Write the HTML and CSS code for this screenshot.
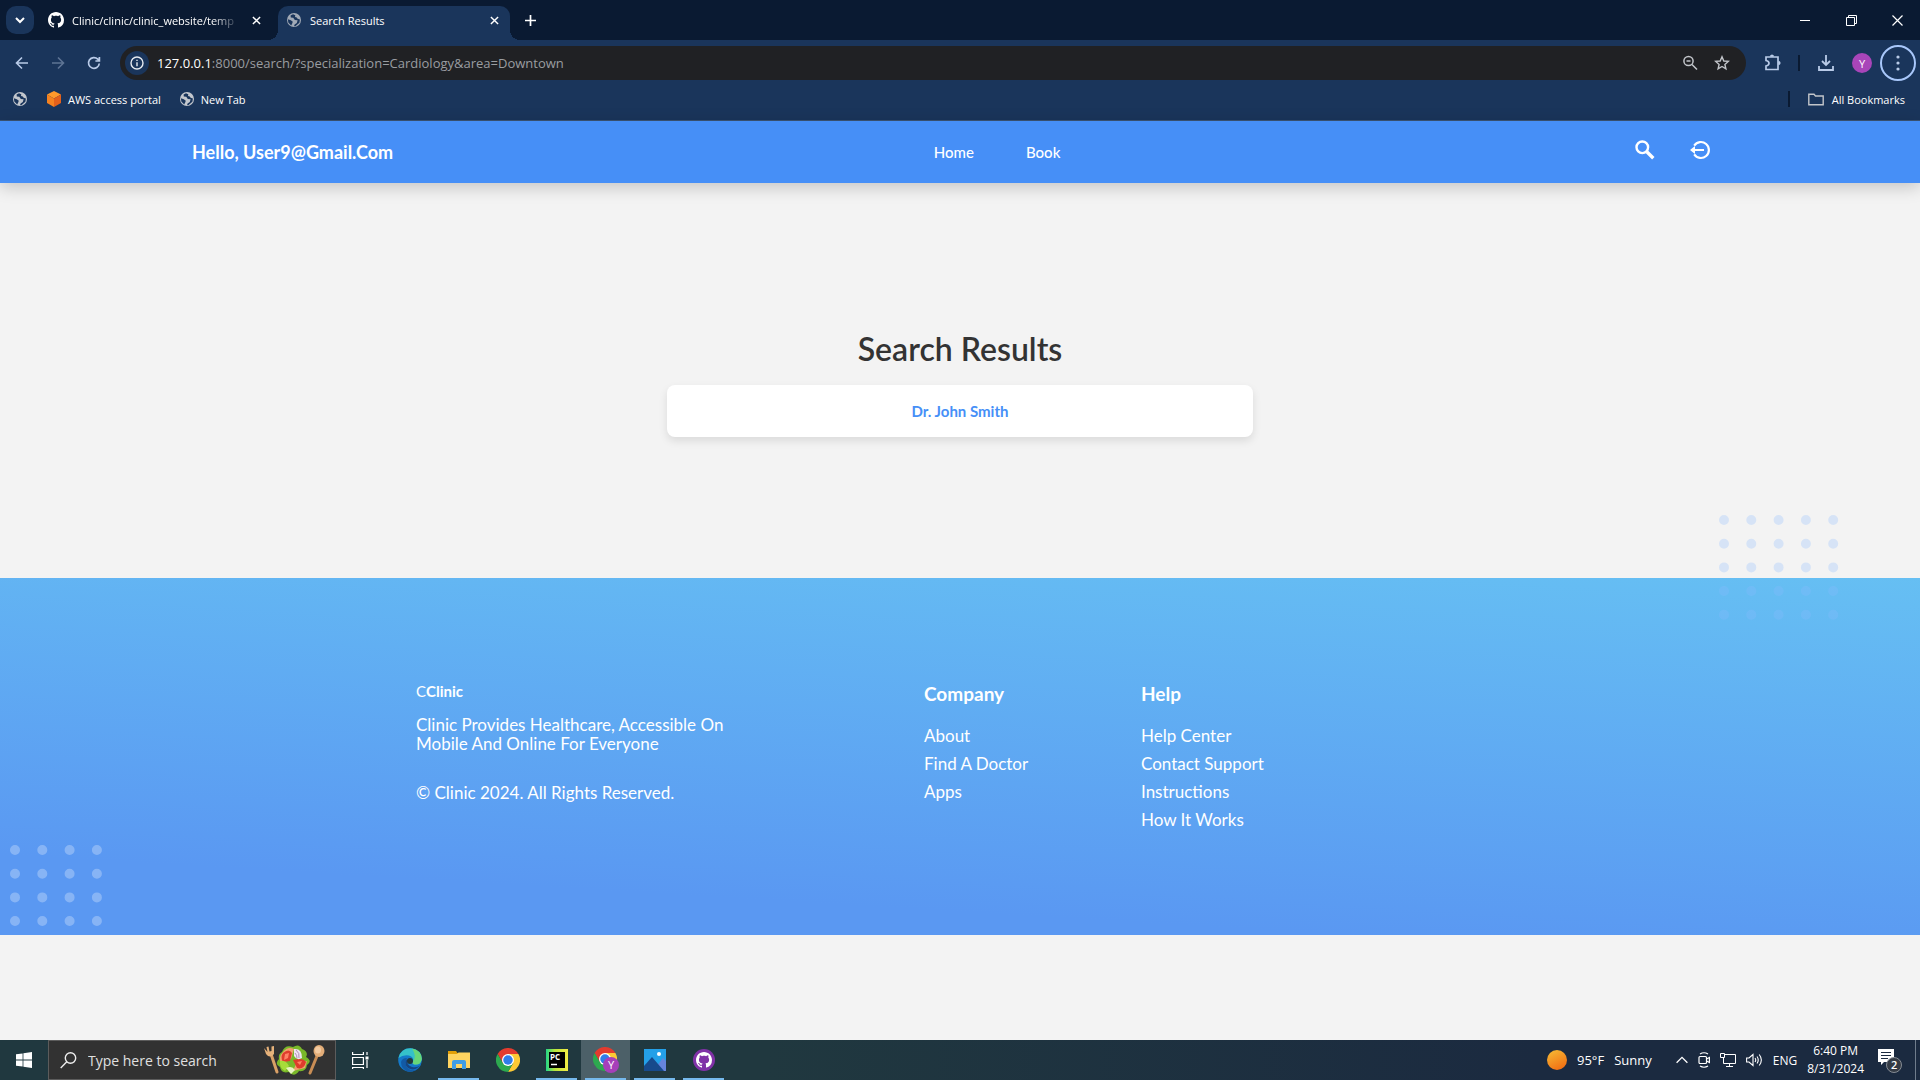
FILE: index.html
```html
<!DOCTYPE html>
<html lang="en">
<head>
<meta charset="utf-8">
<title>Search Results</title>
<link rel="stylesheet" href="styles.css">
</head>
<body>
<svg class="defs" aria-hidden="true">
  <symbol id="globe" viewBox="0 0 16 16"><circle cx="8" cy="8" r="7" fill="#c3c7cd"/><path d="M7 2.2 4.6 3.6 4.8 5.4 7.3 5.8 8.8 8 11.6 8.3 10.8 11 8.6 12.6 8 14.2 9.6 14 13.4 10.8 13.9 7.4 11.6 6.8 10.8 5.6 9 5 9.3 3.2ZM1.9 7.2 2.3 10.6 5.2 13.6 6.2 11.6 6.8 9.8 4.8 8.2Z" fill="#1a355b"/></symbol>
  <symbol id="octocat" viewBox="0 0 16 16"><path fill="#fff" d="M8 0C3.58 0 0 3.58 0 8c0 3.54 2.29 6.53 5.47 7.59.4.07.55-.17.55-.38 0-.19-.01-.82-.01-1.49-2.01.37-2.53-.49-2.69-.94-.09-.23-.48-.94-.82-1.13-.28-.15-.68-.52-.01-.53.63-.01 1.08.58 1.23.82.72 1.21 1.87.87 2.33.66.07-.52.28-.87.51-1.07-1.78-.2-3.64-.89-3.64-3.95 0-.87.31-1.59.82-2.15-.08-.2-.36-1.02.08-2.12 0 0 .67-.21 2.2.82.64-.18 1.32-.27 2-.27s1.36.09 2 .27c1.53-1.04 2.2-.82 2.2-.82.44 1.1.16 1.92.08 2.12.51.56.82 1.27.82 2.15 0 3.07-1.87 3.75-3.65 3.95.29.25.54.73.54 1.48 0 1.07-.01 1.93-.01 2.2 0 .21.15.46.55.38A8.01 8.01 0 0 0 16 8c0-4.42-3.58-8-8-8"/></symbol>
  <symbol id="cross" viewBox="0 0 10 10"><path d="M1 1 9 9M9 1 1 9" stroke="#fff" stroke-width="1.6"/></symbol>
  <symbol id="chrome" viewBox="0 0 48 48"><path d="M24 12H44.8A24 24 0 0 0 3.2 12L13.6 30Z" fill="#e33b2e"/><path d="M34.4 30 24 48A24 24 0 0 0 44.8 12H24Z" fill="#fcc934"/><path d="M13.6 30 3.2 12A24 24 0 0 0 24 48L34.4 30Z" fill="#2da94f"/><circle cx="24" cy="24" r="12" fill="#fff"/><circle cx="24" cy="24" r="9.5" fill="#2f7de9"/></symbol>
</svg>

<header class="browser">
  <div class="tabstrip">
    <button class="tab-search" aria-label="Search tabs"><svg width="10" height="8" viewBox="0 0 10 8"><path d="M1 2 5 6 9 2" fill="none" stroke="#fff" stroke-width="2"/></svg></button>
    <div class="tab">
      <svg width="16" height="16"><use href="#octocat"/></svg>
      <span class="tab-title faded">Clinic/clinic/clinic_website/temp</span>
      <button class="tab-close" aria-label="Close tab"><svg width="9" height="9"><use href="#cross"/></svg></button>
    </div>
    <div class="tab active">
      <svg width="16" height="16" opacity=".8"><use href="#globe"/></svg>
      <span class="tab-title">Search Results</span>
      <button class="tab-close" aria-label="Close tab"><svg width="9" height="9"><use href="#cross"/></svg></button>
    </div>
    <button class="new-tab" aria-label="New tab"><svg width="11" height="11" viewBox="0 0 11 11"><path d="M5.500 0V11M0 5.500H11" stroke="#fff" stroke-width="1.700"/></svg></button>
    <div class="window-controls">
      <button aria-label="Minimize"><svg width="10" height="10"><path d="M0 5.500H10" stroke="#fff"/></svg></button>
      <button aria-label="Restore"><svg width="11" height="11" fill="none" stroke="#fff"><path d="M.5 2.500H8.500V10.500H.5ZM2.500 2.500V.5H10.500V8.500H8.500"/></svg></button>
      <button aria-label="Close"><svg width="11" height="11"><path d="M.5.5 10.500 10.500M10.500.5.5 10.500" stroke="#fff" stroke-width="1.200"/></svg></button>
    </div>
  </div>

  <div class="toolbar">
    <button class="tool" aria-label="Back"><svg width="14" height="14" fill="none" stroke="#b9cbe8" stroke-width="1.600"><path d="M13 7H1.500M7 1.500 1.500 7 7 12.500"/></svg></button>
    <button class="tool" aria-label="Forward"><svg width="14" height="14" fill="none" stroke="#5e7494" stroke-width="1.600"><path d="M1 7H12.500M7 1.500 12.500 7 7 12.500"/></svg></button>
    <button class="tool" aria-label="Reload"><svg width="14" height="14" fill="none" stroke="#b9cbe8" stroke-width="1.700"><path d="M12.300 7.500A5.400 5.400 0 1 1 10.800 3.200L12 4.400M12.400 1V5H8.400"/></svg></button>
    <div class="omnibox">
      <button class="site-info" aria-label="Site information"><svg width="14" height="14" fill="none" stroke="#e6eaf0" stroke-width="1.400"><circle cx="7" cy="7" r="6"/><path d="M7 6.300V10.300M7 3.700V5.100"/></svg></button>
      <div class="url" role="textbox" aria-label="Address"><span class="host">127.0.0.1</span>:8000/search/?specialization=Cardiology&amp;area=Downtown</div>
      <button aria-label="Zoom"><svg width="16" height="16" fill="none" stroke="#c2c5ca" stroke-width="1.500"><circle cx="6.500" cy="6" r="4.600"/><path d="M4.500 6H8.500M10 9.500 15 14.500"/></svg></button>
      <button aria-label="Bookmark this page"><svg width="16" height="16" viewBox="0 0 16 16" fill="none" stroke="#c2c5ca" stroke-width="1.400"><path d="M8 1.800 9.800 6 14.300 6.400 10.900 9.400 11.900 13.900 8 11.500 4.100 13.900 5.100 9.400 1.700 6.400 6.200 6Z"/></svg></button>
    </div>
    <div class="actions">
      <button aria-label="Extensions"><svg width="18" height="18" viewBox="0 0 18 18" fill="none" stroke="#b9cbe8" stroke-width="1.700"><path d="M2 3H14V15.500H2V12Q5 11.500 5 9.300T2 6.500Z"/><path d="M6.500 2.500Q8 .2 9.500 2.500M14.500 7.500Q17 9 14.500 10.500" fill="#b9cbe8"/></svg></button>
      <i class="divider"></i>
      <button aria-label="Downloads"><svg width="16" height="16" fill="none" stroke="#b9cbe8" stroke-width="1.800"><path d="M8 0V9.500M4 6 8 10 12 6M1 11V15H15V11"/></svg></button>
      <button class="avatar" aria-label="Profile">Y</button>
      <button class="menu" aria-label="Menu"><svg width="4" height="16" fill="#b9cbe8"><circle cx="2" cy="2" r="1.600"/><circle cx="2" cy="8" r="1.600"/><circle cx="2" cy="14" r="1.600"/></svg></button>
    </div>
  </div>

  <nav class="bookmarks" aria-label="Bookmarks">
    <a href="#" aria-label="Bookmark"><svg width="16" height="16"><use href="#globe"/></svg></a>
    <a href="#"><svg width="16" height="16" viewBox="0 0 16 16"><path d="M8 0 15 3.500 8 7.500 1 3.500Z" fill="#ff9a2b"/><path d="M1 3.500 8 7.500V16L1 12Z" fill="#f58220"/><path d="M15 3.500 8 7.500V16L15 12Z" fill="#e4601b"/></svg>AWS access portal</a>
    <a href="#"><svg width="16" height="16"><use href="#globe"/></svg>New Tab</a>
    <i class="divider"></i>
    <a href="#" class="all"><svg width="16" height="13" fill="none" stroke="#c2c5ca" stroke-width="1.400"><path d="M.8 1.200H6L7.500 3H15.200V11.800H.8Z"/></svg>All Bookmarks</a>
  </nav>
</header>

<div class="page">
  <header class="site-header">
    <strong class="greeting">Hello, User9@Gmail.Com</strong>
    <nav class="site-nav"><a href="#">Home</a><a href="#">Book</a></nav>
    <div class="site-icons">
      <a href="#" aria-label="Search"><svg width="20" height="20" fill="none" stroke="#fff"><circle cx="7.300" cy="7.300" r="5.800" stroke-width="2.400"/><path d="M11.800 11.800 18.300 18.300" stroke-width="3.400"/></svg></a>
      <a href="#" aria-label="Log out"><svg width="20" height="20" fill="none" stroke="#fff" stroke-width="2.200"><path d="M4.200 5.600A8 8 0 1 1 4.200 14.400M5 10H14"/><path d="M0 10 5 6V14Z" fill="#fff" stroke="none"/></svg></a>
    </div>
  </header>

  <main class="results">
    <h1>Search Results</h1>
    <ul><li><a href="#">Dr. John Smith</a></li></ul>
  </main>

  <footer class="site-footer">
    <svg class="dots dots-right" width="120" height="106"><path d="M5 5H116M5 28.700H116M5 52.400H116M5 76H116M5 99.700H116"/></svg>
    <svg class="dots dots-left" width="92" height="82"><path d="M5 5H88M5 28.700H88M5 52.400H88M5 76H88"/></svg>
    <div class="brand">
      <p class="logo">C<b>Clinic</b></p>
      <p class="about">Clinic Provides Healthcare, Accessible On Mobile And Online For Everyone</p>
      <p>© Clinic 2024. All Rights Reserved.</p>
    </div>
    <section class="company"><h2>Company</h2><ul><li><a href="#">About</a></li><li><a href="#">Find A Doctor</a></li><li><a href="#">Apps</a></li></ul></section>
    <section><h2>Help</h2><ul><li><a href="#">Help Center</a></li><li><a href="#">Contact Support</a></li><li><a href="#">Instructions</a></li><li><a href="#">How It Works</a></li></ul></section>
  </footer>
</div>

<div class="taskbar">
  <button class="start" aria-label="Start"><svg width="16" height="16" fill="#fff"><path d="M0 2.300 6.600 1.400V7.600H0ZM7.400 1.300 16 0V7.600H7.400ZM0 8.400H6.600V14.600L0 13.700ZM7.400 8.400H16V16L7.400 14.700Z"/></svg></button>
  <label class="search">
    <svg width="17" height="17" fill="none" stroke="#eee" stroke-width="1.400"><circle cx="10.500" cy="6" r="5.200"/><path d="M6.800 9.800.7 16"/></svg>
    <input type="text" placeholder="Type here to search" aria-label="Type here to search">
    <svg width="62" height="32" viewBox="0 0 62 32">
      <path d="M8 10 14 28" stroke="#d9a066" stroke-width="3" stroke-linecap="round"/><path d="M1 4 3 10Q7 15 11 10L11 2 8.500 2.500V7L6.500 7.500 5.500 2.500 3.500 3 4.500 8Z" fill="#e6b27a"/>
      <path d="M54 12 47 29" stroke="#c98d55" stroke-width="3" stroke-linecap="round"/><ellipse cx="56" cy="7" rx="5.500" ry="6" fill="#e3ad78"/><ellipse cx="55" cy="6" rx="3" ry="3.500" fill="#f3caa0"/>
      <path d="M19 8Q22 0 30 3Q36-1 39 5Q46 8 43 13Q50 17 44 21Q43 28 36 27Q31 34 26 28Q18 30 17 23Q11 20 16 15Q15 10 19 8Z" fill="#79b829"/>
      <path d="M20 8Q25 2 31 5L28 15 18 20Q15 13 20 8M30 27 42 24 44 17 33 20Z" fill="#f0a06c"/><path d="M20 9Q26 4 29 9L27 17 20 18Q17 13 20 9M30 16Q40 13 43 18Q41 26 34 24Z" fill="#de3d2d"/><path d="M22 10 26 9 25 14 21 16ZM34 18 39 17 37 21Z" fill="#ff8265"/>
      <path d="M31 5Q39 4 39 14Q34 17 31 12Z" fill="#eee6f3"/><path d="M33 6Q37 9 36 14M32 9Q34 11 34 14" fill="none" stroke="#b58bb6"/><path d="M17 17Q23 16 26 22L22 27Q16 24 17 17" fill="#a7dc3a"/><path d="M23 24Q29 21 32 26L28 30Z" fill="#e8f4c2"/>
    </svg>
  </label>
  <button class="app" aria-label="Task view"><svg width="17" height="17" fill="none" stroke="#fff" stroke-width="1.200"><path d="M.6 0V2.500H11.400V0M.6 5.500H11.400V12.500H.6ZM.6 17V15.500H11.400V17M15 0V3M15 8V16"/><path d="M13.500 4.500H16.500V7.500H13.500Z" fill="#fff" stroke="none"/></svg></button>
  <button class="app" aria-label="Edge"><svg width="24" height="24" viewBox="0 0 24 24"><circle cx="12" cy="12" r="11.800" fill="#1479c9"/><path d="M.5 10Q3 0 13 .3Q24 2 23.800 11Q23 17 17 16.500Q13.500 16 15 13.500Q16 9 11 7.500Q5 6.500 .5 10" fill="#35c1c9"/><path d="M14 .5Q24 3 23.800 11Q23 17 17 16.500Q13.500 16 15 13.500Q19 8 14 .5" fill="#68d778"/><path d="M9 10Q5 17 11 21Q16 24 21 19.500Q17 24 11 23.800Q3 22 3 14Q4 10 9 10" fill="#125aa5"/><path d="M9.500 11Q8 17 14 19Q19 20 22 17.500Q18 22 14 21.500Q7 20 7.500 14Q8 11.500 9.500 11" fill="#164582"/><circle cx="12" cy="13" r="3" fill="#20383f"/></svg></button>
  <button class="app open" aria-label="File Explorer"><svg width="22" height="20" viewBox="0 0 22 20"><path d="M0 1H8L9.500 3H21V8H0Z" fill="#e3a008"/><path d="M0 4H9L10.500 2.500H22V18H0Z" fill="#ffd460"/><path d="M4 19V12Q4 10 6 10H16Q18 10 18 12V19H14V14H8V19Z" fill="#3f9de4"/></svg></button>
  <button class="app" aria-label="Chrome"><svg width="24" height="24"><use href="#chrome"/></svg></button>
  <button class="app open" aria-label="PyCharm"><svg width="22" height="22" viewBox="0 0 22 22"><defs><linearGradient id="py"><stop stop-color="#21d789"/><stop offset=".4" stop-color="#b9e33c"/><stop offset="1" stop-color="#f4ed45"/></linearGradient></defs><path d="M0 0H22V22H0Z" fill="url(#py)"/><path d="M3 3H19V19H3Z"/><path d="M5 15.500H11" stroke="#fff" stroke-width="1.500"/><text x="4" y="11" class="pc">PC</text></svg></button>
  <button class="app open current" aria-label="Chrome, Search Results"><svg width="26" height="26" viewBox="0 0 26 26"><svg width="24" height="24"><use href="#chrome"/></svg><circle cx="18" cy="18" r="8" fill="#a63fb9"/><text x="15" y="22" class="yy">Y</text></svg></button>
  <button class="app open" aria-label="Photos"><svg width="22" height="22" viewBox="0 0 22 22"><path d="M0 0H22V22H0Z" fill="#24a0e8"/><path d="M9 22 19 9 22 12V22Z" fill="#6684dc"/><path d="M0 17 8 8 20 22H0Z" fill="#174a8c"/><circle cx="15" cy="5" r="2" fill="#fff"/></svg></button>
  <button class="app open" aria-label="GitHub Desktop"><svg width="22" height="22" viewBox="0 0 22 22"><circle cx="11" cy="11" r="11" fill="#8031a7"/><svg x="3" y="3" width="16" height="16"><use href="#octocat"/></svg></svg></button>

  <div class="tray">
    <button class="weather"><svg width="20" height="20"><defs><linearGradient id="sun" x2=".5" y2="1"><stop stop-color="#f6bd36"/><stop offset="1" stop-color="#f27315"/></linearGradient></defs><circle cx="10" cy="10" r="10" fill="url(#sun)"/></svg><span>95°F</span><span>Sunny</span></button>
    <button aria-label="Hidden icons"><svg width="12" height="8" fill="none" stroke="#fff" stroke-width="1.300"><path d="M.6 6.800 6 1.400 11.400 6.800"/></svg></button>
    <button aria-label="Meet now"><svg width="12" height="16" fill="none" stroke="#fff" stroke-width="1.200"><rect x="1" y="4.500" width="7.500" height="7" rx="1"/><path d="M8.500 7 11.400 5.500V10.500L8.500 9M2 2Q6-.5 10 2M2 14Q6 16.500 10 14"/></svg></button>
    <button aria-label="Network"><svg width="16" height="14" fill="none" stroke="#fff"><path d="M4.500 1.500H15.500V10.500H3.500V5M9.500 10.500V13.500M6 13.500H13M.5.5H4.500V4.500H.5Z"/></svg></button>
    <button aria-label="Volume"><svg width="17" height="14" fill="none" stroke="#fff" stroke-width="1.100"><path d="M.6 5H3L7 1.500V12.500L3 9H.6ZM9 5Q10.500 7 9 9M11 3.500Q13.500 7 11 10.500M13.200 1.500Q17.500 7 13.200 12.500"/></svg></button>
    <button class="lang">ENG</button>
    <button class="clock"><span>6:40 PM</span><span>8/31/2024</span></button>
    <button class="notify" aria-label="Notifications"><svg width="24" height="25" viewBox="0 0 24 25"><path d="M0 1H16V14H6L3 17V14H0Z" fill="#fff"/><path d="M3 4.500H13M3 7.500H13M3 10.500H10" stroke="#1b2a40"/><circle cx="16" cy="17" r="7.500" fill="#343b45" stroke="#868c94"/><text x="13" y="21" class="yy count">2</text></svg></button>
    <i class="peek"></i>
  </div>
</div>
</body>
</html>
```

FILE: styles.css
```css
* { box-sizing: border-box; }
body { margin: 0; min-height: 100vh; display: flex; flex-direction: column; background: #f3f3f3; font-family: "Open Sans", sans-serif; font-size: 12px; color: #fff; }
button { display: flex; align-items: center; justify-content: center; border: 0; padding: 0; background: none; color: inherit; font: inherit; }
a { color: inherit; text-decoration: none; }
ul { list-style: none; margin: 0; padding: 0; }
h1, h2, p { margin: 0; }
svg { display: block; flex: none; }
.defs { position: absolute; width: 0; height: 0; }

/* browser frame */
.browser { background: #1a355b; border-bottom: 1px solid #3b5474; font-size: 11px; }
.tabstrip { display: flex; align-items: center; height: 40px; padding-left: 6px; background: #0a1a32; }
.tab-search { width: 28px; height: 28px; border-radius: 10px; background: #1a355b; }
.tab { display: flex; align-items: center; gap: 8px; width: 232px; height: 34px; padding: 0 8px; }
.tab:not(.active) { margin-left: 6px; }
.tab.active { position: relative; align-self: flex-end; padding-bottom: 6px; background: #1a355b; border-radius: 10px 10px 0 0; margin-left: 6px; }
.tab.active::before, .tab.active::after { content: ""; position: absolute; bottom: 0; width: 10px; height: 10px; }
.tab.active::before { right: 100%; background: radial-gradient(circle at 0 0, #0a1a32 10px, #1a355b 10px); }
.tab.active::after { left: 100%; background: radial-gradient(circle at 100% 0, #0a1a32 10px, #1a355b 10px); }
.tab-title { flex: 1; white-space: nowrap; }
.faded { mask-image: linear-gradient(to right, #000 140px, transparent 168px); }
.tab-close { width: 16px; height: 16px; }
.new-tab { width: 28px; height: 28px; margin-left: 6px; }
.window-controls { display: flex; margin-left: auto; }
.window-controls button { width: 46px; height: 40px; }
.toolbar { display: flex; align-items: center; gap: 2px; height: 46px; padding: 0 4px 0 5px; }
.tool { width: 34px; height: 34px; }
.omnibox { flex: 1; display: flex; align-items: center; gap: 16px; height: 34px; margin-left: 7px; padding: 0 16px 0 5px; border-radius: 17px; background: #202124; }
.site-info { width: 24px; height: 24px; border-radius: 50%; background: #1a355b; }
.url { flex: 1; margin-left: -8px; color: #9a9da1; font-size: 13px; }
.host { color: #fff; }
.actions { display: flex; align-items: center; padding-left: 16px; }
.divider { width: 2px; height: 16px; background: #0a1a32; }
.actions .divider { margin: 0 18px 0 16px; }
.avatar { width: 20px; height: 20px; margin: 0 8px 0 18px; border-radius: 50%; background: #a845b9; }
.menu { width: 36px; height: 36px; border: 2px solid #a8c7fa; border-radius: 50%; }
.bookmarks { display: flex; align-items: center; gap: 18px; height: 34px; padding: 0 15px 8px 12px; }
.bookmarks a { display: flex; align-items: center; gap: 6px; }
.bookmarks .divider { margin-left: auto; }
.bookmarks .all { gap: 8px; }

/* clinic site */
.page { flex: 1; font-family: Lato, sans-serif; font-size: 17px; }
.site-header { position: relative; display: flex; align-items: center; justify-content: space-between; height: 62px; padding: 0 10%; background: #468ff7; box-shadow: 0 4px 16px rgba(0, 0, 0, .2); }
.greeting { font-size: 18px; }
.site-nav { display: flex; font-size: 15px; font-weight: 500; }
.site-nav a { padding: 0 26px; }
.site-icons { display: flex; gap: 35px; padding: 0 18px 4px 34px; }
.results { display: flex; flex-direction: column; align-items: center; gap: 16px; padding: 146px 0 141px; }
.results h1 { color: #333; font-size: 32px; font-weight: 600; line-height: 40px; }
.results ul { width: 586px; max-width: 90%; }
.results li { padding: 16px; border-radius: 8px; background: #fff; box-shadow: 0 4px 8px rgba(0, 0, 0, .1); text-align: center; line-height: 20px; font-size: 15px; font-weight: 700; color: #468ff7; }
.site-footer { position: relative; display: flex; align-items: flex-start; min-height: 357px; padding: 104px 20% 96px 416px; background: linear-gradient(183.41deg, #67c3f3 -8.57%, #5a98f2 82.96%); }
.brand { flex: none; width: 320px; margin-right: 188px; line-height: 19px; }
.logo { font-size: 15px; margin-bottom: 14px; }
.about { margin-bottom: 30px; }
.company { width: 217px; }
.site-footer h2 { margin-bottom: 16px; font-size: 19px; line-height: 24px; }
.site-footer li { line-height: 28px; }
.dots { position: absolute; fill: none; stroke-width: 10; stroke-linecap: round; stroke-dasharray: 0 27.3; }
.dots-right { right: 81px; top: -63px; stroke: #8cbbff; opacity: .27; }
.dots-left { left: 10px; bottom: 8px; stroke: #fff; opacity: .27; }

/* taskbar */
.taskbar { display: flex; height: 40px; background: linear-gradient(to right, #20383f 40%, #1b2a40 80%); }
.start { width: 48px; }
.search { display: flex; align-items: center; width: 288px; padding: 0 10px 0 11px; border: 1px solid #5c5c5c; background: #323232; }
.search input { flex: 1; min-width: 0; margin-left: 11px; padding: 0; border: 0; background: none; font: 14px "Open Sans", sans-serif; }
.search input::placeholder { color: #e0e0e0; opacity: 1; }
.app { width: 49px; border: solid transparent; border-width: 2px 0; }
.app.open { border-image: linear-gradient(to right, transparent 4px, #76b9ed 4px 45px, transparent 45px) 2 0; border-top-width: 0; padding-top: 2px; }
.app.current { background: #4c6068; }
.pc { fill: #fff; font: 700 8px "Open Sans", sans-serif; }
.yy { fill: #fff; font: 11px "Open Sans", sans-serif; }
.count { font-weight: 600; }
.tray { display: flex; align-items: center; gap: 10px; margin-left: auto; }
.tray button { height: 40px; }
.weather { gap: 10px; margin-right: 14px; font-size: 13px; }
.lang { font-size: 12px; }
.clock { flex-direction: column; line-height: 18px; }
.notify { margin: 0 3px 0 4px; }
.peek { width: 5px; height: 40px; border-left: 1px solid #6f7c8c; }
```
